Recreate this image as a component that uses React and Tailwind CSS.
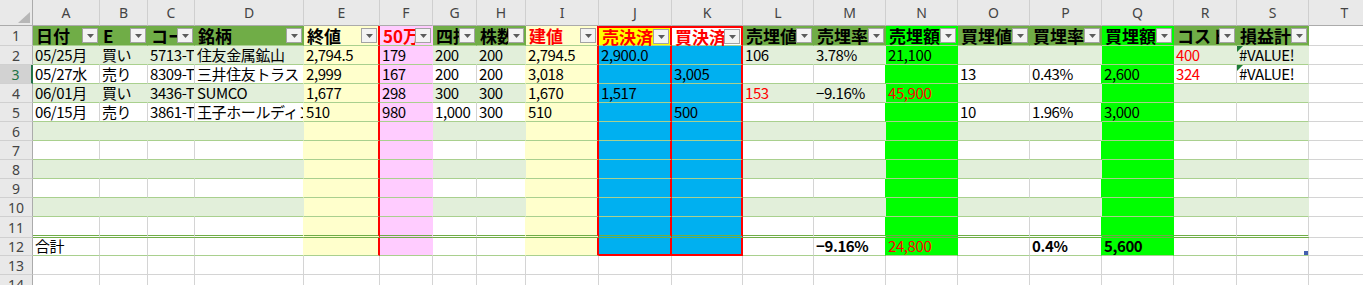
import React from "react";

const COLS = ["A", "B", "C", "D", "E", "F", "G", "H", "I", "J", "K", "L", "M", "N", "O", "P", "Q", "R", "S", "T"];

// header row (row 1) titles
const HEAD = {
  A: "日付", B: "E", C: "コード", D: "銘柄", E: "終値", F: "50万", G: "四捨", H: "株数", I: "建値", J: "売決済",
  K: "買決済", L: "売埋値", M: "売埋率", N: "売埋額", O: "買埋値", P: "買埋率", Q: "買埋額", R: "コスト", S: "損益計",
};

const HEAD_FILL = {
  A: "green", B: "green", C: "green", D: "green", E: "yellow", F: "pink", G: "green", H: "green", I: "yellow",
  J: "gold", K: "white", L: "green", M: "green", N: "lime", O: "green", P: "green", Q: "lime", R: "green",
  S: "green", T: "white",
};
const COL_FILL = { E: "yellow", F: "pink", I: "yellow", J: "blue", K: "blue", N: "lime", Q: "lime" };
const RED_HEAD = ["F", "I", "J", "K"];
const RED_RIGHT = ["E", "I", "J", "K"];

const DATA = {
  2: { A: "05/25月", B: "買い", C: "5713-T", D: "住友金属鉱山", E: "2,794.5", F: "179", G: "200", H: "200", I: "2,794.5", J: "2,900.0", L: "106", M: "3.78%", N: "21,100", R: "400", S: "#VALUE!" },
  3: { A: "05/27水", B: "売り", C: "8309-T", D: "三井住友トラスト・ホールディングス", E: "2,999", F: "167", G: "200", H: "200", I: "3,018", K: "3,005", O: "13", P: "0.43%", Q: "2,600", R: "324", S: "#VALUE!" },
  4: { A: "06/01月", B: "買い", C: "3436-T", D: "SUMCO", E: "1,677", F: "298", G: "300", H: "300", I: "1,670", J: "1,517", L: "153", M: "−9.16%", N: "45,900" },
  5: { A: "06/15月", B: "売り", C: "3861-T", D: "王子ホールディングス", E: "510", F: "980", G: "1,000", H: "300", I: "510", K: "500", O: "10", P: "1.96%", Q: "3,000" },
  12: { A: "合計", M: "−9.16%", N: "24,800", P: "0.4%", Q: "5,600" },
};
const RED_CELLS = ["R2", "R3", "L4", "N4", "N12"];
const BOLD_CELLS = ["M12", "P12", "Q12"];
const ERR_CELLS = ["S2", "S3"];

const BG = {
  green: "bg-[#70ad47]", band: "bg-[#e2efda]", white: "bg-white", yellow: "bg-[#ffffcc]", pink: "bg-[#ffccff]",
  blue: "bg-[#00b0f0]", lime: "bg-[#00ff00]", gold: "bg-[#ffff00]",
};
const BR = {
  green: "border-r-[#70ad47]", band: "border-r-[#e2efda]", white: "border-r-white", yellow: "border-r-[#ffffcc]",
  pink: "border-r-[#ffccff]", blue: "border-r-[#00b0f0]", lime: "border-r-[#00ff00]", gold: "border-r-[#ffff00]",
};

const ROWS = [1, 2, 3, 4, 5, 6, 7, 8, 9, 10, 11, 12, 13, 14];

function fillOf(r, c) {
  if (r === 1) return HEAD_FILL[c];
  if (r >= 2 && r <= 12 && c !== "T") {
    if (COL_FILL[c]) return COL_FILL[c];
    return r % 2 === 0 && r <= 10 ? "band" : "white";
  }
  return "white";
}

function rightOf(r, i) {
  const c = COLS[i];
  const inTable = r >= 1 && r <= 12 && c !== "T";
  if (inTable && RED_RIGHT.includes(c)) return "border-r-2 border-r-[#ff0000]";
  const f = fillOf(r, c);
  if (f !== "white") return "border-r " + BR[f];
  const nf = i + 1 < COLS.length ? fillOf(r, COLS[i + 1]) : "white";
  if (nf !== "white") return "border-r " + BR[nf];
  return "border-r border-r-[#d4d4d4]";
}

function bottomOf(r, c) {
  const inTable = r >= 1 && r <= 12 && c !== "T";
  if (!inTable) return "border-b border-b-[#d4d4d4]";
  if (r === 11) return "border-b-[3px] border-double border-b-[#70ad47]";
  if (r === 12 && (c === "J" || c === "K")) return "border-b-2 border-b-[#ff0000]";
  return "border-b border-b-[#a9d08e]";
}

function FilterButton() {
  return (
    <div className="shrink-0 mr-[1px] w-[16px] h-[15px] border border-[#a3a3a3] bg-[#f3f3f3] flex items-center justify-center">
      <svg width="7" height="4" viewBox="0 0 7 4">
        <path d="M0 0H7L3.5 4Z" fill="#5c5c5c" />
      </svg>
    </div>
  );
}

function Cell({ r, i }) {
  const c = COLS[i];
  const key = c + r;
  const cls = [BG[fillOf(r, c)], rightOf(r, i), bottomOf(r, c)];

  if (r === 1) {
    const top = c === "J" || c === "K" ? "border-t-2 border-t-[#ff0000]" : "";
    if (c === "T") return <div className={cls.join(" ")} />;
    return (
      <div className={`${cls.join(" ")} ${top} flex items-center min-w-0`}>
        <span
          className={`flex-1 min-w-0 overflow-hidden whitespace-nowrap pl-[3px] text-[17px] leading-[19px] font-bold ${
            RED_HEAD.includes(c) ? "text-[#ff0000]" : "text-black"
          }`}
        >
          {HEAD[c]}
        </span>
        <FilterButton />
      </div>
    );
  }

  const text = DATA[r] && DATA[r][c];
  const red = RED_CELLS.includes(key);
  const bold = BOLD_CELLS.includes(key);
  return (
    <div className={`${cls.join(" ")} relative flex items-end min-w-0 overflow-hidden`}>
      {ERR_CELLS.includes(key) && (
        <svg className="absolute left-0 top-0" width="6" height="6" viewBox="0 0 6 6">
          <path d="M0 0H6L0 6Z" fill="#1d7a35" />
        </svg>
      )}
      {key === "S12" && <div className="absolute right-0 bottom-0 w-[4px] h-[4px] bg-[#4460b0]" />}
      {text && (
        <span
          className={`whitespace-nowrap pl-[2px] text-[15px] leading-[18px] tracking-[-0.4px] ${
            red ? "text-[#ff0000]" : "text-black"
          } ${bold ? "font-bold" : ""}`}
        >
          {text}
        </span>
      )}
    </div>
  );
}

export default function App() {
  return (
    <div className="w-[1363px] h-[285px] overflow-hidden bg-white font-['Noto_Sans_CJK_JP','Noto_Sans',sans-serif]">
      <div className="grid w-max grid-cols-[33px_67px_48px_47px_109px_76px_53px_44px_49px_73px_73px_71px_71px_72px_72px_72px_72px_72px_63px_72px_72px] grid-rows-[26px_20px_19px_19px_19px_19px_19px_19px_19px_19px_19px_21px_18px_19px_19px]">
        {/* corner */}
        <div className="bg-[#e9e9e9] border-r border-b border-[#ababab] flex items-end justify-end pr-[2px] pb-[2px]">
          <svg width="12" height="11" viewBox="0 0 12 11">
            <path d="M12 0V11H0Z" fill="#b7b7b7" />
          </svg>
        </div>
        {/* column letters */}
        {COLS.map((c) => (
          <div
            key={c}
            className="bg-[#e9e9e9] border-r border-r-[#cfcfcf] border-b border-b-[#ababab] flex items-center justify-center text-[14px] text-[#444] font-['Noto_Sans',sans-serif]"
          >
            {c}
          </div>
        ))}

        {ROWS.map((r) => (
          <React.Fragment key={r}>
            <div
              className={`flex items-center justify-center text-[14px] font-['Noto_Sans',sans-serif] border-b border-b-[#d0d0d0] ${
                r === 3
                  ? "bg-[#d2d2d2] text-[#217346] border-r-2 border-r-[#217346]"
                  : "bg-[#e9e9e9] text-[#444] border-r border-r-[#ababab]"
              }`}
            >
              {r}
            </div>
            {COLS.map((c, i) => (
              <Cell key={c} r={r} i={i} />
            ))}
          </React.Fragment>
        ))}
      </div>
    </div>
  );
}
